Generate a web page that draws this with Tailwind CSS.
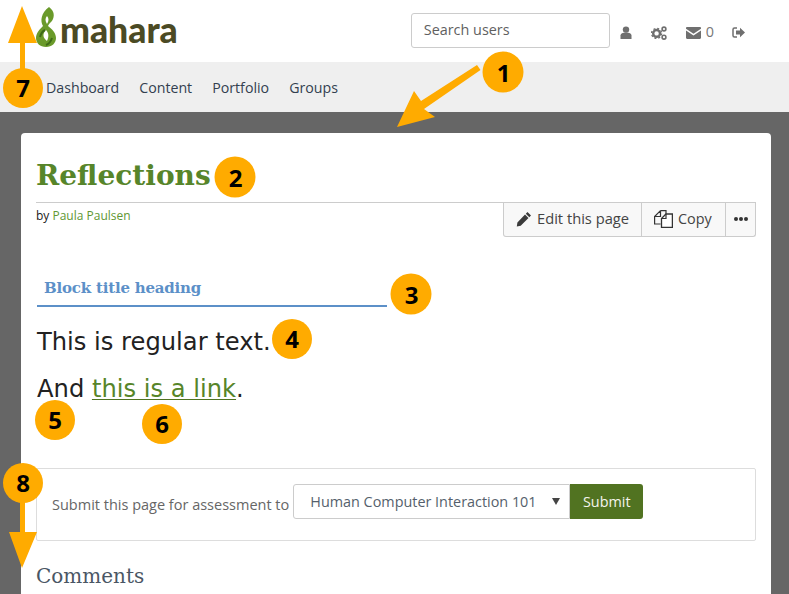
<!DOCTYPE html>
<html lang="en">
<head>
<meta charset="utf-8">
<title>Reflections</title>
<script src="https://cdn.jsdelivr.net/npm/@tailwindcss/browser@4"></script>
</head>
<body class="relative h-[594px] w-[789px] overflow-hidden bg-[#666666] font-['Open_Sans',sans-serif] text-[14.4px] text-[#333333]">
<header class="flex h-[62px] items-start bg-white">
  <div class="ml-[36px] mt-[7px] flex items-center">
    <svg width="20" height="40" viewBox="0 0 20 40"><path d="M13 0c4 3 6 7 4 12-1 3-4 4-5 7 4 3 8 7 8 12 0 5-4 9-10 9S0 36 0 31c0-5 4-9 7-12C4 14 5 6 13 0z" fill="#6a9a2a"/><path d="M11 9c2 2 2 5 0 8-2-3-2-6 0-8zM10 23c3 3 3 7 1 11-4-3-5-7-1-11z" fill="#fff"/><path d="M4 30c1-4 3-6 5-7M16 31c-1 3-3 6-6 7" fill="none" stroke="#3e6a18" stroke-width="2"/></svg>
    <span class="ml-[4px] mt-[5px] font-['Lato',sans-serif] text-[35.5px] font-black leading-none text-[#4b4a24]">mahara</span>
  </div>
  <div class="ml-auto mt-[13px] flex items-center">
    <div class="flex h-[35px] w-[199px] items-center rounded-[3px] border border-[#cccccc] bg-white pb-[2px] pl-3 text-[#5f5f5f]">Search users</div>
    <div class="mt-[4px] flex items-center text-[#6f6f6f]">
      <svg class="ml-[10px]" width="12" height="13" viewBox="0 0 12 13"><circle cx="6" cy="3.6" r="3.2" fill="#6f6f6f"/><path d="M0.5 13V9.6C0.5 7.6 2.5 6.6 6 6.6s5.500 1 5.500 3V13z" fill="#6f6f6f"/></svg>
      <svg class="ml-[19px]" width="16" height="14" viewBox="0 0 16 14"><circle cx="5.600" cy="7.400" r="3.400" fill="none" stroke="#6f6f6f" stroke-width="2.400"/><circle cx="5.600" cy="7.400" r="5" fill="none" stroke="#6f6f6f" stroke-width="1.400" stroke-dasharray="2 1.930"/><circle cx="13" cy="3" r="1.900" fill="none" stroke="#6f6f6f" stroke-width="1.600"/><circle cx="13" cy="11.200" r="1.900" fill="none" stroke="#6f6f6f" stroke-width="1.600"/></svg>
      <svg class="ml-[19px]" width="15" height="12" viewBox="0 0 15 12"><path d="M0 1.200C0 .5.500 0 1.200 0h12.600c.7 0 1.200.5 1.200 1.200v.6L7.500 6.800 0 1.800z" fill="#6f6f6f"/><path d="M0 3.400l7.500 5 7.500-5v7.400c0 .7-.5 1.200-1.200 1.200H1.200C.5 12 0 11.500 0 10.800z" fill="#6f6f6f"/></svg>
      <span class="ml-[5px] leading-none text-[#777777]">0</span>
      <svg class="ml-[18px]" width="13" height="11" viewBox="0 0 13 11"><path d="M5 1H2.500C1.500 1 1 1.500 1 2.500v6C1 9.500 1.500 10 2.500 10H5" fill="none" stroke="#6f6f6f" stroke-width="1.500"/><path d="M4 3.500h4V.8l5 4.700-5 4.700V7.500H4z" fill="#6f6f6f"/></svg>
      <span class="w-[44px]"></span>
    </div>
  </div>
</header>
<nav class="flex h-[50px] items-center gap-[20px] bg-[#efefef] pl-[46px] pt-[1px] text-[14.2px] text-[#333f4f]">
  <span>Dashboard</span><span>Content</span><span>Portfolio</span><span>Groups</span>
</nav>
<main class="ml-[21px] mr-[18px] mt-[21px] h-[470px] rounded-t-[4px] bg-white px-[15px]">
  <h1 class="pt-[23px] font-['DejaVu_Serif',serif] text-[28px] font-bold leading-[40px] text-[#57852a]">Reflections</h1>
  <div class="mt-[6px] flex justify-between border-t border-[#cccccc]">
    <div class="pt-[4px] text-[12px] leading-[18px] text-[#222222]">by <span class="text-[#5f9733]">Paula Paulsen</span></div>
    <div class="flex h-[34px] rounded-b-[3px] border border-t-0 border-[#cccccc] bg-[#f8f8f8] pb-[2px] text-[#444444]">
      <div class="-mb-[2px] flex w-[138px] items-center gap-[5px] border-r border-[#cccccc] pb-[2px] pl-[12px]">
        <svg width="16" height="16" viewBox="0 0 16 16"><path d="M11.500 1l3.500 3.500-1.700 1.700-3.500-3.500zM9 3.500L12.500 7l-7.800 7.800L0.800 15.500l.6-4.100z" fill="#3b3b3b"/></svg>
        <span class="text-[14.7px]">Edit this page</span>
      </div>
      <div class="-mb-[2px] flex w-[84px] items-center gap-[5px] border-r border-[#cccccc] pb-[2px] pl-[12px]">
        <svg width="19" height="18" viewBox="0 0 19 18"><path d="M6.500.6h5.500v4M6.500.6L.6 6.500v7.500h6M6.500.6v5.900H.6" fill="none" stroke="#333" stroke-width="1.200"/><path d="M12 4h6.400v13.400H7.500V8.500z" fill="#fff" stroke="#333" stroke-width="1.300"/><path d="M12 4v4.500H7.500" fill="none" stroke="#333" stroke-width="1.200"/></svg>
        <span>Copy</span>
      </div>
      <div class="flex w-[29px] items-center justify-center gap-[1px]">
        <span class="h-[4px] w-[4px] rounded-full bg-[#333333]"></span><span class="h-[4px] w-[4px] rounded-full bg-[#333333]"></span><span class="h-[4px] w-[4px] rounded-full bg-[#333333]"></span>
      </div>
    </div>
  </div>
  <section class="ml-[1px] mt-[39px] w-[350px]">
    <h2 class="border-b-2 border-[#5c90c8] pb-[5px] pl-[7px] font-['DejaVu_Serif',serif] text-[15px] font-bold leading-[24px] tracking-[-0.2px] text-[#5c90c8]">Block title heading</h2>
  </section>
  <p class="ml-[1px] mt-[18px] font-['DejaVu_Sans',sans-serif] text-[24.2px] leading-[34px] text-[#222222]">This is regular text.</p>
  <p class="ml-[1px] mt-[13px] font-['DejaVu_Sans',sans-serif] text-[24.2px] leading-[34px] text-[#222222]">And <a class="text-[#57852a] underline decoration-[#4f7321] decoration-1 underline-offset-[2px]">this is a link</a>.</p>
  <div class="mt-[62px] flex h-[73px] items-center rounded-[2px] border border-[#dddddd] pl-[15px] text-[#666666]">
    <span class="text-[14.5px]">Submit this page for assessment to</span>
    <div class="mb-[6px] ml-[4px] flex h-[35px] w-[277px] items-center justify-between rounded-l-[3px] border border-[#cccccc] bg-white pl-[16px] pr-[9px] text-[#555f6c]">
      <span>Human Computer Interaction 101</span>
      <svg width="8" height="7" viewBox="0 0 8 7"><path d="M0 0h8L4 7z" fill="#444444"/></svg>
    </div>
    <div class="mb-[6px] flex h-[35px] w-[73px] items-center justify-center rounded-r-[3px] bg-[#517321] text-[#f4f4ec]">Submit</div>
  </div>
  <h2 class="mt-[20px] font-['DejaVu_Serif',serif] text-[20px] font-light leading-[30px] text-[#4a5664]">Comments</h2>
</main>
<svg class="absolute left-0 top-0" width="789" height="594" viewBox="0 0 789 594" aria-hidden="true">
  <g fill="#ffab00" stroke="none">
    <path d="M477 65l3.500 5L424 109l11 8-38 10 17-36 7 10z"/>
    <path d="M20 75V43H8L22 6l15 37H25v32z"/>
    <path d="M20 495v37H9l13 36 15-36H25v-37z"/>
    <circle cx="503" cy="72" r="20.500"/><circle cx="235" cy="177" r="20.500"/><circle cx="411" cy="294" r="20.500"/><circle cx="292" cy="339" r="20"/><circle cx="55" cy="420" r="20"/><circle cx="162" cy="424" r="20"/><circle cx="23" cy="88" r="20"/><circle cx="23" cy="483" r="20"/>
  </g>
</svg>
<div class="absolute left-[483px] top-[52px] flex h-[41px] w-[41px] items-center justify-center text-[24px] font-bold text-black">1</div>
<div class="absolute left-[215px] top-[157px] flex h-[41px] w-[41px] items-center justify-center text-[24px] font-bold text-black">2</div>
<div class="absolute left-[391px] top-[274px] flex h-[41px] w-[41px] items-center justify-center text-[24px] font-bold text-black">3</div>
<div class="absolute left-[272px] top-[319px] flex h-[40px] w-[40px] items-center justify-center text-[24px] font-bold text-black">4</div>
<div class="absolute left-[35px] top-[400px] flex h-[40px] w-[40px] items-center justify-center text-[24px] font-bold text-black">5</div>
<div class="absolute left-[142px] top-[404px] flex h-[40px] w-[40px] items-center justify-center text-[24px] font-bold text-black">6</div>
<div class="absolute left-[3px] top-[68px] flex h-[40px] w-[40px] items-center justify-center text-[24px] font-bold text-black">7</div>
<div class="absolute left-[3px] top-[463px] flex h-[40px] w-[40px] items-center justify-center text-[24px] font-bold text-black">8</div>
</body>
</html>
